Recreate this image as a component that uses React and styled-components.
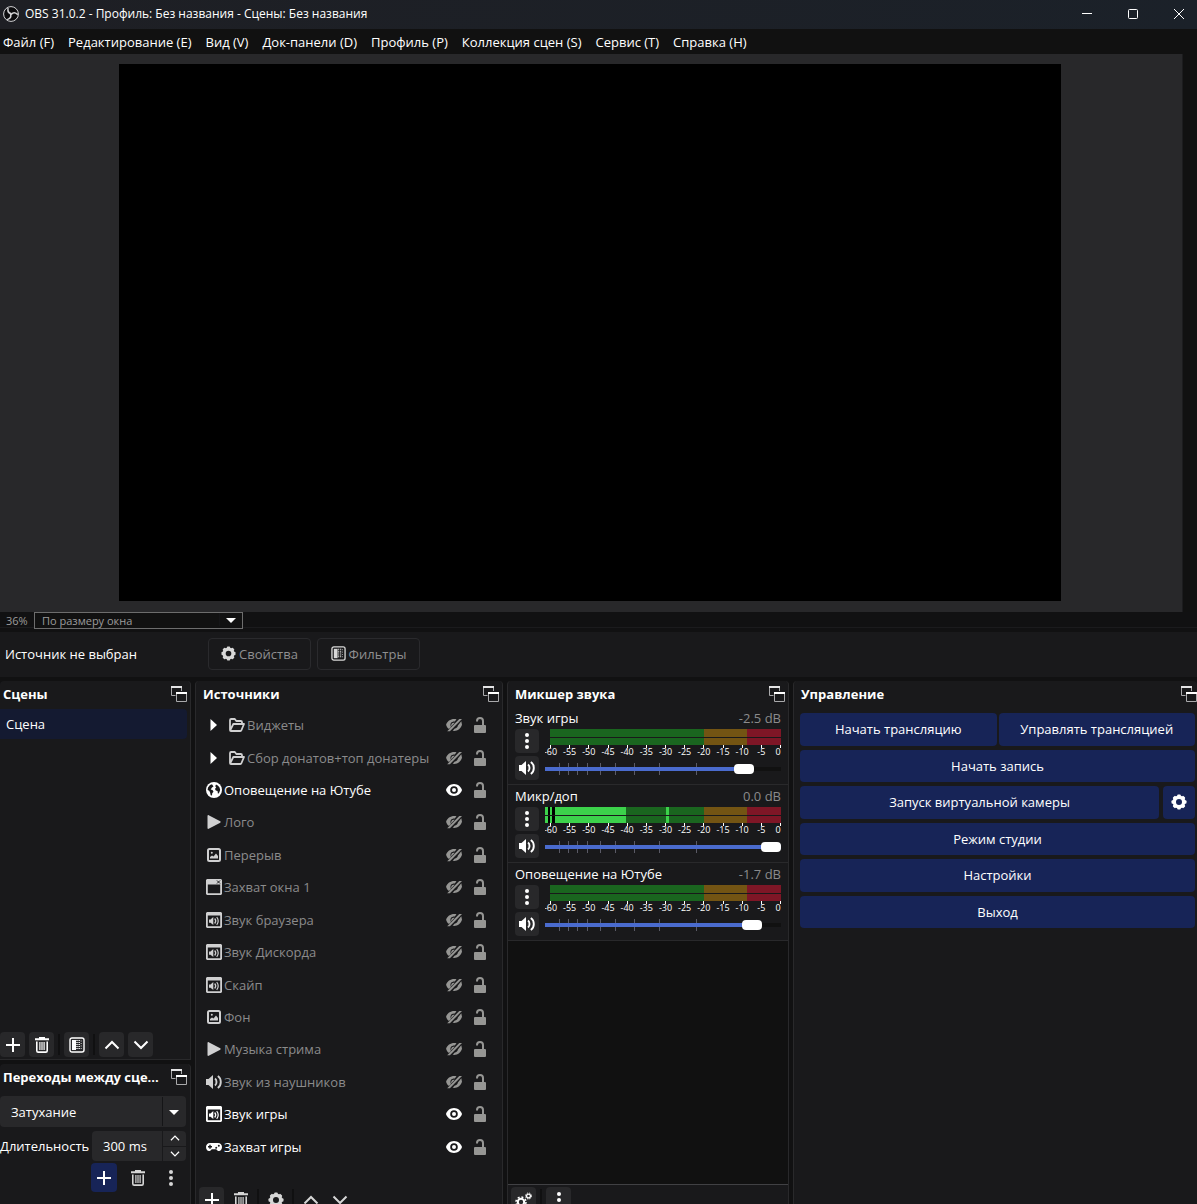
import React, { useId, useState } from 'react'
import styled, { createGlobalStyle, css } from 'styled-components'

const GlobalStyle = createGlobalStyle`
	*,
	*::before,
	*::after {
		box-sizing: border-box;
	}

	body {
		background: #111112;
		color: #fff;
		font-family: 'Open Sans', 'Noto Sans', sans-serif;
		font-size: 13px;
		line-height: 18px;
		margin: 0;
		overflow: hidden;
	}

	button,
	input,
	select {
		color: inherit;
		font: inherit;
	}

	svg {
		display: block;
		flex: none;
	}
`

/* ---------- icons ---------- */

const Icon = ({ size = 16, children }) => (
	<svg width={size} height={size} viewBox="0 0 16 16" fill="currentColor" aria-hidden="true">
		{children}
	</svg>
)

const ObsLogo = () => (
	<svg width="16" height="16" viewBox="0 0 32 32" aria-hidden="true">
		<circle cx="16" cy="16" r="14.8" fill="#0b0b0d" stroke="#d4d4d6" strokeWidth="2" />
		<g fill="none" stroke="#d4d4d6" strokeWidth="3" strokeLinecap="round">
			<path d="M10 5c-1 6 1 9 6 10" />
			<path d="M10 5c-1 6 1 9 6 10" transform="rotate(120 16 16)" />
			<path d="M10 5c-1 6 1 9 6 10" transform="rotate(240 16 16)" />
		</g>
	</svg>
)

const PopOut = () => (
	<svg width="16" height="16" viewBox="0 0 16 16" aria-hidden="true">
		<path d="M.5 2v7.500h4M10.500 2v3" fill="none" stroke="#a9a9ab" />
		<path d="M0 0h11v2H0z" fill="#e4e4e5" />
		<path d="M5.500 8v7.500h10V8" fill="none" stroke="#a9a9ab" />
		<path d="M5 6h11v2H5z" fill="#fff" />
	</svg>
)

const Gear = ({ size }) => (
	<Icon size={size}>
		<circle cx="8" cy="8" r="4.700" fill="none" stroke="currentColor" strokeWidth="3.400" />
		{[0, 45, 90, 135, 180, 225, 270, 315].map((angle) => (
			<rect key={angle} x="6.200" y="0.500" width="3.600" height="3" rx="1" transform={`rotate(${angle} 8 8)`} />
		))}
	</Icon>
)

const Gears = () => (
	<svg width="18" height="16" viewBox="0 0 18 16" aria-hidden="true">
		<g fill="none" stroke="#fff">
			<circle cx="6" cy="10" r="3.200" strokeWidth="2" />
			<circle cx="6" cy="10" r="5" strokeWidth="1.500" strokeDasharray="2 1.900" />
			<circle cx="13.500" cy="4" r="1.900" strokeWidth="1.300" />
			<circle cx="13.500" cy="4" r="3" strokeWidth="1" strokeDasharray="1.300 1.100" />
		</g>
	</svg>
)

const Filter = ({ size }) => (
	<Icon size={size}>
		<rect x="1" y="1" width="14" height="14" rx="2" fill="none" stroke="currentColor" strokeWidth="1.400" />
		<path d="M3 3h4v10H3z" />
		<path
			d="M8 3v10M10.200 3v10"
			stroke="currentColor"
			strokeWidth="1.400"
			strokeDasharray="1 1"
			fill="none"
		/>
		<path d="M12.200 3.500v10" stroke="currentColor" strokeWidth=".8" strokeDasharray="1 1.500" fill="none" />
	</Icon>
)

const Plus = () => (
	<Icon>
		<path d="M7 1h2v6h6v2H9v6H7V9H1V7h6z" />
	</Icon>
)

const Trash = () => (
	<Icon>
		<path d="M5 0h6v1.200h4v2H1v-2h4z" />
		<path d="M2.800 4.500v9.200c0 .9.500 1.400 1.400 1.400h7.600c.9 0 1.400-.5 1.400-1.400V4.500" fill="none" stroke="currentColor" strokeWidth="1.600" />
		<path d="M5.300 5h1.200v8H5.300zM7.400 5h1.200v8H7.400zM9.500 5h1.200v8H9.500z" />
	</Icon>
)

const Chevron = ({ down, size }) => (
	<Icon size={size}>
		<path
			d={down ? 'M1.500 4.500 8 11l6.500-6.500' : 'M1.500 11.500 8 5l6.500 6.500'}
			fill="none"
			stroke="currentColor"
			strokeWidth="2"
		/>
	</Icon>
)

const Dots = () => (
	<Icon>
		<circle cx="8" cy="2" r="2" />
		<circle cx="8" cy="8" r="2" />
		<circle cx="8" cy="14" r="2" />
	</Icon>
)

const Speaker = () => (
	<Icon>
		<path d="M0 5h2.500L7 1v14l-4.500-4H0z" />
		<path d="M9 4.500c2 1.500 2 5.500 0 7M11.800 2c4 2.500 4 9.500 0 12" fill="none" stroke="currentColor" strokeWidth="1.900" />
	</Icon>
)

const Eye = () => (
	<Icon>
		<path
			fillRule="evenodd"
			d="M8 2c4 0 7 2.800 8 6-1 3.200-4 6-8 6s-7-2.800-8-6c1-3.200 4-6 8-6zm0 2.200a3.800 3.800 0 1 0 0 7.600 3.800 3.800 0 0 0 0-7.600z"
		/>
		<circle cx="8" cy="8" r="2" />
	</Icon>
)

const EyeOff = () => (
	<Icon>
		<path d="M10.500 2.300C5.500 1.300 1.200 3.800.1 7.800c.4 1.800 1.400 3.200 2.900 4.300l2-2C3.400 6.600 5.500 4.400 8.800 4.600z" />
		<path d="M5.300 9.400C4.700 7 6.400 5.200 8.700 5.800z" />
		<path d="M13.300 2h2.700L3.900 14.200H1.200z" />
		<path d="m15.300 4.200.7 3.600c-1.200 4.300-5 6.700-9.400 6l2.200-2.200c1.700-.4 2.700-1.500 3.100-3.200z" />
	</Icon>
)

const Unlocked = () => (
	<svg width="12" height="16" viewBox="0 0 12 16" fill="currentColor" aria-hidden="true">
		<rect y="8" width="12" height="8" rx="1" />
		<path d="M3 4.500V4a3 3 0 0 1 6 0v5" fill="none" stroke="currentColor" strokeWidth="2" />
	</svg>
)

const Folder = () => (
	<Icon>
		<path
			d="M1 13V3.200C1 2.500 1.500 2 2.200 2h3.600l1.500 2h4.500c.7 0 1.200.5 1.200 1.200V7M1.200 13.300 4.300 7H15l-2.500 6c-.2.600-.6 1-1.200 1H2c-.6 0-1-.4-1-1"
			fill="none"
			stroke="currentColor"
			strokeWidth="1.800"
			strokeLinejoin="round"
		/>
	</Icon>
)

const Globe = () => (
	<Icon>
		<circle cx="8" cy="8" r="8" />
		<path
			d="M6 2.200 4 3 2 5.500 1.600 8l1.600.8.900 1.800.6 2.600 1.300.3.200-2.300 1.300-1.500-1-1.700-1.800-.6L6 5.500l1.500-1zM10 2.500l-.8 1.700 1 1L9 7l.8 1.600 1.700.3.500 3 1.400-1.600.8-2.600-.8-2.400-1.600-1.800z"
			fill="#19191b"
		/>
	</Icon>
)

const Play = () => (
	<Icon>
		<path d="M1.500 2c0-.8.600-1.100 1.200-.8l11.500 6.100c.6.400.6 1 0 1.400L2.700 14.800c-.6.300-1.200 0-1.200-.8z" />
	</Icon>
)

const Picture = () => (
	<Icon>
		<rect x="2" y="2" width="12" height="12" rx="1.500" fill="none" stroke="currentColor" strokeWidth="2" />
		<path d="M4 11.500V10l2-1.500 1.500 1L10 6.500l2 2.500v2.500z" />
		<circle cx="5.800" cy="5.800" r="1" />
	</Icon>
)

const WindowIcon = () => (
	<Icon>
		<path fillRule="evenodd" d="M1 0h14l1 1v14l-1 1H1l-1-1V1zm.8 5.500v8.700h12.400V5.500z" />
		<path d="m11 1.500 3 3m0-3-3 3" stroke="#19191b" strokeWidth="1" />
	</Icon>
)

const WindowAudio = () => (
	<Icon>
		<path fillRule="evenodd" d="M1 0h14l1 1v14l-1 1H1l-1-1V1zm.8 3.500v10.700h12.400V3.500z" />
		<path d="M3 7.500h1.500L7.300 5v8L4.500 10.800H3z" />
		<path d="M8.700 6.500c1.200 1.400 1.200 3.600 0 5M10.700 5.200c2 2 2 5.600 0 7.600" fill="none" stroke="currentColor" strokeWidth="1.200" />
	</Icon>
)

const Gamepad = () => (
	<Icon>
		<path
			fillRule="evenodd"
			d="M4 4h8c2.500 0 4 1.700 4 4s-1.200 4-3 4c-1.200 0-2-.7-2.700-1.800H5.700C5 11.300 4.200 12 3 12c-1.800 0-3-1.700-3-4s1.500-4 4-4zM3.300 5.800v1.300H2v1.400h1.300v1.300h1.400V8.500H6V7.100H4.700V5.800zM10.800 8a1 1 0 1 0 0 1.600A1 1 0 0 0 10.800 8zm2-2.200a1 1 0 1 0 0 2 1 1 0 0 0 0-2z"
		/>
	</Icon>
)

const Expand = () => (
	<svg width="7" height="12" viewBox="0 0 7 12" fill="#fff" aria-hidden="true">
		<path d="M.5 0 7 6 .5 12z" />
	</svg>
)

const DropArrow = () => (
	<svg width="10" height="5" viewBox="0 0 10 5" fill="#fff" aria-hidden="true">
		<path d="M0 0h10L5 5z" />
	</svg>
)

/* ---------- window chrome ---------- */

const Window = styled.div`
	display: flex;
	flex-direction: column;
	height: 100vh;
	overflow: hidden;
`

const TitleBar = styled.header`
	align-items: center;
	background: linear-gradient(90deg, #1e1f24, #1b2129);
	display: flex;
	flex: none;
	gap: 6px;
	height: 29px;
	padding: 0 0 2px 3px;
`

const WindowTitle = styled.h1`
	flex: 1;
	font-size: 12px;
	font-weight: 400;
	margin: 0;
`

const WindowButtons = styled.div`
	display: flex;
	margin-right: -5px;
`

const WindowButton = styled.button`
	align-items: center;
	background: none;
	border: 0;
	display: flex;
	height: 27px;
	justify-content: center;
	padding: 0;
	width: 46px;
`

const MenuBar = styled.nav`
	background: #111;
	display: flex;
	flex: none;
	gap: 14px;
	height: 25px;
	padding: 4px 3px;
`

const MenuLink = styled.a`
	color: #fff;
	text-decoration: none;
	white-space: nowrap;
`

/* ---------- preview ---------- */

const PreviewRow = styled.div`
	display: flex;
	flex: none;
`

const Preview = styled.main`
	background: #28282a;
	border-right: 1px solid #1c1c1e;
	flex: 1;
	padding: 10px 121px 11px 119px;
`

const Canvas = styled.div`
	aspect-ratio: 942 / 537;
	background: #000;
`

const ScrollGutter = styled.div`
	background: #111;
	width: 14px;
`

const ZoomBar = styled.div`
	border-bottom: 1px solid #1b1b1d;
	color: #9c9c9c;
	display: flex;
	flex: none;
	font-size: 11px;
	height: 16px;
	line-height: 16px;
	margin-bottom: 4px;
`

const ZoomLevel = styled.span`
	padding: 1px 0 0 6px;
	width: 34px;
`

const SelectBox = styled.span`
	display: flex;
	position: relative;

	svg {
		pointer-events: none;
		position: absolute;
		right: 7px;
		top: calc(50% - 2px);
	}

	&::after {
		background: #151517;
		content: '';
		inset: 1px 23px 1px auto;
		position: absolute;
		width: 1px;
	}
`

const ZoomSelect = styled.select`
	appearance: none;
	background: #111;
	border: 1px solid #6d6d6d;
	height: 17px;
	line-height: 15px;
	padding: 0 7px;
	width: 209px;
`

const ContextBar = styled.section`
	align-items: center;
	background: #19191b;
	display: flex;
	flex: none;
	gap: 6px;
	height: 45px;
	margin-bottom: 4px;
	padding: 0 5px 2px;
`

const ContextLabel = styled.span`
	width: 197px;
`

const ContextButton = styled.button`
	align-items: center;
	background: none;
	border: 1px solid #2a2a2d;
	border-radius: 4px;
	color: #8f8f90;
	display: flex;
	gap: 3px;
	height: 32px;
	justify-content: center;
	padding: 0;
	width: 103px;

	svg {
		color: #d8d8d8;
	}
`

/* ---------- docks ---------- */

const Docks = styled.div`
	display: grid;
	flex: none;
	gap: 4px;
	grid-template-columns: 191fr 308fr 282fr 404fr;
`

const DockColumn = styled.div`
	display: flex;
	flex-direction: column;
	gap: 4px;
	min-width: 0;
`

const Dock = styled.section`
	background: #19191b;
	border: solid #29292b;
	border-width: 0 1px 1px;
	border-radius: 4px 4px 0 0;
	display: flex;
	flex-direction: column;
	flex: ${({ $grow }) => ($grow ? 1 : 'none')};
	min-width: 0;

	${({ $edge }) =>
		$edge &&
		css`
			border-${$edge}-width: 0;
		`}
`

const DockHeader = styled.header`
	align-items: center;
	display: flex;
	flex: none;
	gap: 8px;
	height: 28px;
	justify-content: space-between;
	padding: 0 ${({ $right = 3 }) => $right}px 2px ${({ $left = 7 }) => $left}px;
`

const DockTitle = styled.h2`
	font-size: 13px;
	font-weight: 700;
	margin: 0;
	white-space: nowrap;
`

const BareButton = styled.button`
	background: none;
	border: 0;
	color: inherit;
	display: flex;
	flex: none;
	justify-content: center;
	padding: 0;
`

const DockHead = ({ title, ...rest }) => (
	<DockHeader {...rest}>
		<DockTitle>{title}</DockTitle>
		<BareButton aria-label={`Открепить: ${title}`}>
			<PopOut />
		</BareButton>
	</DockHeader>
)

const Toolbar = styled.div`
	display: flex;
	flex: none;
	gap: 4px;
	padding: 2px ${({ $left = 3 }) => $left}px;
`

const ToolButton = styled.button`
	align-items: center;
	background: ${({ $flat }) => ($flat ? 'none' : '#28282a')};
	border: 0;
	border-radius: 4px;
	color: ${({ $flat }) => ($flat ? '#d6d6d6' : '#fff')};
	display: flex;
	height: 25px;
	justify-content: center;
	padding: 0;
	width: 25px;
`

const Separator = styled.span`
	background: #101011;
	margin: 2px 0;
	width: 2px;
`

const SceneList = styled.ul`
	flex: 1;
	list-style: none;
	margin: 0;
	padding: 0 3px 0 0;
`

const Scene = styled.li`
	background: #141a31;
	border-radius: 0 4px 4px 0;
	padding: 6px;
`

const TransitionForm = styled.div`
	display: flex;
	flex-direction: column;
	gap: 4px;
	padding: 4px 4px 22px 0;
`

const TransitionSelect = styled.select`
	appearance: none;
	background: #28282a;
	border: 0;
	border-radius: 4px;
	height: 31px;
	padding: 0 11px;
	width: 100%;
`

const DurationRow = styled.div`
	align-items: center;
	display: flex;
	gap: 4px;
	height: 30px;
`

const DurationLabel = styled.label`
	flex: 1;
	min-width: 0;
	white-space: nowrap;
`

const SpinBox = styled.div`
	background: #28282a;
	border-radius: 4px;
	display: flex;
	height: 30px;
	width: 94px;
`

const SpinInput = styled.input`
	background: none;
	border: 0;
	min-width: 0;
	padding: 0 0 0 11px;
	width: 70px;
`

const SpinButtons = styled.div`
	border-left: 1px solid #19191b;
	display: flex;
	flex: 1;
	flex-direction: column;

	button {
		align-items: center;
		flex: 1;
	}

	button + button {
		border-top: 1px solid #19191b;
	}
`

const TransitionTools = styled.div`
	align-items: center;
	display: flex;
	gap: 8px;
	justify-content: flex-end;
	margin-top: -2px;
	padding-right: 3px;
`

const AddButton = styled(ToolButton)`
	background: #172457;
	height: 29px;
	width: 26px;
`

/* ---------- sources ---------- */

const SourceList = styled.ul`
	display: flex;
	flex-direction: column;
	height: 454px;
	list-style: none;
	margin: 0 0 22px;
	padding: 0 16px 0 10px;
`

const Source = styled.li`
	align-items: center;
	color: ${({ $active }) => ($active ? '#fff' : '#8b8b8c')};
	display: flex;
	flex: 1;
	gap: 2px;
	padding-left: ${({ $folder }) => ($folder ? 4 : 0)}px;

	& > svg {
		color: ${({ $active }) => ($active ? '#fff' : '#d0d0d1')};
	}
`

const SourceName = styled.span`
	flex: 1;
	white-space: nowrap;
`

const ExpandButton = styled(BareButton)`
	margin-right: 10px;
`

const SourceState = styled(BareButton)`
	color: ${({ $on }) => ($on ? '#fff' : '#969694')};
	margin-right: ${({ $last }) => ($last ? 0 : 10)}px;
`

/* ---------- mixer ---------- */

const Channel = styled.div`
	border-bottom: 1px solid #29292b;
	display: grid;
	gap: 0 6px;
	grid-template-columns: 24px 1fr;
	grid-template-rows: 20px 1fr;
	height: 78px;
	padding: 2px 7px 0;

	&:first-of-type {
		height: 76px;
		padding-top: 0;
	}
`

const ChannelHead = styled.div`
	display: flex;
	grid-column: 1 / -1;
	justify-content: space-between;
`

const Decibels = styled.output`
	color: #8b8b8c;
`

const ChannelButtons = styled.div`
	display: flex;
	flex-direction: column;
	gap: 3px;
`

const ChannelButton = styled(ToolButton)`
	height: 24px;
	width: 24px;
`

const MeterSvg = styled.svg`
	display: block;
	height: 29px;
	width: 100%;

	text {
		fill: #fff;
		font-size: 9px;
		text-anchor: middle;
	}
`

const Volume = styled.div`
	display: flex;
	height: 22px;
	position: relative;
`

const VolumeTicks = styled.svg`
	height: 12px;
	left: 0;
	pointer-events: none;
	position: absolute;
	top: 5px;
	width: 100%;
`

const Slider = styled.input.attrs(({ value }) => ({
	type: 'range',
	min: 0,
	max: 1000,
	style: { '--fill': `${value / 10}%` },
}))`
	appearance: none;
	background: linear-gradient(90deg, #4a6bce var(--fill), #111 var(--fill)) center / 100% 4px no-repeat;
	height: 22px;
	margin: 0;
	width: 100%;

	&::-webkit-slider-thumb {
		appearance: none;
		background: #fff;
		border-radius: 4px;
		height: 10px;
		width: 20px;
	}
`

const MixerSpace = styled.div`
	background: #111;
	border-bottom: 1px solid #414144;
	flex: 1;
`

/* ---------- controls ---------- */

const Controls = styled.div`
	display: grid;
	gap: 4px;
	grid-template-rows: repeat(6, 1fr);
	height: 223px;
	padding: 4px 2px 4px 6px;
`

const ControlRow = styled.div`
	display: flex;
	gap: ${({ $gap = 2 }) => $gap}px;
`

const ControlButton = styled.button`
	align-items: center;
	background: #172457;
	border: 0;
	border-radius: 4px;
	display: flex;
	flex: ${({ $square }) => ($square ? '0 0 32px' : 1)};
	justify-content: center;
	padding: 0;
`

const menu = [
	'Файл (F)',
	'Редактирование (E)',
	'Вид (V)',
	'Док-панели (D)',
	'Профиль (P)',
	'Коллекция сцен (S)',
	'Сервис (T)',
	'Справка (H)',
]

const sources = [
	{ name: 'Виджеты', icon: Folder, folder: true },
	{ name: 'Сбор донатов+топ донатеры', icon: Folder, folder: true },
	{ name: 'Оповещение на Ютубе', icon: Globe, active: true },
	{ name: 'Лого', icon: Play },
	{ name: 'Перерыв', icon: Picture },
	{ name: 'Захват окна 1', icon: WindowIcon },
	{ name: 'Звук браузера', icon: WindowAudio },
	{ name: 'Звук Дискорда', icon: WindowAudio },
	{ name: 'Скайп', icon: WindowAudio },
	{ name: 'Фон', icon: Picture },
	{ name: 'Музыка стрима', icon: Play },
	{ name: 'Звук из наушников', icon: Speaker },
	{ name: 'Звук игры', icon: WindowAudio, active: true },
	{ name: 'Захват игры', icon: Gamepad, active: true },
]

const channels = [
	{ name: 'Звук игры', db: '-2.5 dB', level: 875 },
	{ name: 'Микр/доп', db: '0.0 dB', level: 1000, live: true },
	{ name: 'Оповещение на Ютубе', db: '-1.7 dB', level: 912 },
]

const METER_WIDTH = 236
const pct = (value) => `${(value / METER_WIDTH) * 100}%`
const dbToX = (db) => 5.5 + ((60 + db) / 60) * 230

const Meter = ({ live }) => (
	<MeterSvg aria-hidden="true" shapeRendering="crispEdges">
		{live && <rect width={pct(20)} height="16" fill="#000" />}
		<rect x={pct(live ? 10 : 5)} width={pct(live ? 149 : 154)} height="16" fill="#1a651f" />
		<rect x={pct(159)} width={pct(43)} height="16" fill="#735413" />
		<rect x={pct(202)} width={pct(34)} height="16" fill="#7e1626" />
		{live && (
			<g fill="#3cd24b">
				<rect width={pct(3)} height="16" />
				<rect x={pct(5)} width={pct(2)} height="16" />
				<rect x={pct(10)} width={pct(71)} height="16" />
				<rect x={pct(121)} width={pct(3)} height="16" />
			</g>
		)}
		<rect y="8" width="100%" height="1" fill="#19191b" />
		{Array.from({ length: 13 }, (_, i) => {
			const db = i * 5 - 60
			return (
				<React.Fragment key={db}>
					<rect x={pct(dbToX(db) - 0.5)} y="16" width="1" height="3" fill="#fff" />
					<text x={pct(db === 0 ? 233 : dbToX(db))} y="26">
						{db}
					</text>
				</React.Fragment>
			)
		})}
	</MeterSvg>
)

const MixerChannel = ({ name, db, level, live }) => {
	const [value, setValue] = useState(level)

	return (
		<Channel>
			<ChannelHead>
				<span>{name}</span>
				<Decibels>{db}</Decibels>
			</ChannelHead>
			<ChannelButtons>
				<ChannelButton aria-label="Меню">
					<Dots />
				</ChannelButton>
				<ChannelButton aria-label="Выключить звук">
					<Speaker />
				</ChannelButton>
			</ChannelButtons>
			<div>
				<Meter live={live} />
				<Volume>
					<Slider aria-label={name} value={value} onChange={(e) => setValue(Number(e.target.value))} />
					<VolumeTicks aria-hidden="true">
						{[14, 23, 32, 42, 55, 70, 89, 114, 151].map((x) => (
							<g key={x} fill="#5a5a66">
								<rect x={pct(x)} width="1" height="4" />
								<rect x={pct(x)} y="8" width="1" height="4" />
							</g>
						))}
					</VolumeTicks>
				</Volume>
			</div>
		</Channel>
	)
}

const Scenes = () => (
	<Dock $grow $edge="left">
		<DockHead title="Сцены" $left={3} />
		<SceneList>
			<Scene>Сцена</Scene>
		</SceneList>
		<Toolbar $left={0}>
			<ToolButton aria-label="Добавить">
				<Plus />
			</ToolButton>
			<ToolButton aria-label="Удалить">
				<Trash />
			</ToolButton>
			<Separator />
			<ToolButton aria-label="Фильтры">
				<Filter />
			</ToolButton>
			<Separator />
			<ToolButton aria-label="Вверх">
				<Chevron />
			</ToolButton>
			<ToolButton aria-label="Вниз">
				<Chevron down />
			</ToolButton>
		</Toolbar>
	</Dock>
)

const Transitions = () => {
	const durationId = useId()
	const [duration, setDuration] = useState('300 ms')

	return (
		<Dock $edge="left">
			<DockHead title="Переходы между сце..." $left={3} />
			<TransitionForm>
				<SelectBox>
					<TransitionSelect aria-label="Переход">
						<option>Затухание</option>
					</TransitionSelect>
					<DropArrow />
				</SelectBox>
				<DurationRow>
					<DurationLabel htmlFor={durationId}>Длительность</DurationLabel>
					<SpinBox>
						<SpinInput id={durationId} value={duration} onChange={(e) => setDuration(e.target.value)} />
						<SpinButtons>
							<BareButton aria-label="Больше">
								<Chevron size={10} />
							</BareButton>
							<BareButton aria-label="Меньше">
								<Chevron down size={10} />
							</BareButton>
						</SpinButtons>
					</SpinBox>
				</DurationRow>
				<TransitionTools>
					<AddButton aria-label="Добавить переход">
						<Plus />
					</AddButton>
					<ToolButton $flat aria-label="Удалить переход">
						<Trash />
					</ToolButton>
					<ToolButton $flat aria-label="Свойства перехода">
						<Dots />
					</ToolButton>
				</TransitionTools>
			</TransitionForm>
		</Dock>
	)
}

const Sources = () => (
	<Dock>
		<DockHead title="Источники" />
		<SourceList>
			{sources.map(({ name, icon: SourceIcon, folder, active }) => (
				<Source key={name} $folder={folder} $active={active}>
					{folder && (
						<ExpandButton aria-label={`Развернуть ${name}`}>
							<Expand />
						</ExpandButton>
					)}
					<SourceIcon />
					<SourceName>{name}</SourceName>
					<SourceState $on={active} aria-label="Видимость">
						{active ? <Eye /> : <EyeOff />}
					</SourceState>
					<SourceState $last aria-label="Блокировка">
						<Unlocked />
					</SourceState>
				</Source>
			))}
		</SourceList>
		<Toolbar>
			<ToolButton aria-label="Добавить источник">
				<Plus />
			</ToolButton>
			<ToolButton $flat aria-label="Удалить источник">
				<Trash />
			</ToolButton>
			<Separator />
			<ToolButton $flat aria-label="Свойства источника">
				<Gear />
			</ToolButton>
			<Separator />
			<ToolButton $flat aria-label="Выше">
				<Chevron />
			</ToolButton>
			<ToolButton $flat aria-label="Ниже">
				<Chevron down />
			</ToolButton>
		</Toolbar>
	</Dock>
)

const Mixer = () => (
	<Dock>
		<DockHead title="Микшер звука" />
		{channels.map((channel) => (
			<MixerChannel key={channel.name} {...channel} />
		))}
		<MixerSpace />
		<Toolbar>
			<ToolButton aria-label="Расширенные свойства">
				<Gears />
			</ToolButton>
			<Separator />
			<ToolButton aria-label="Меню микшера">
				<Dots />
			</ToolButton>
		</Toolbar>
	</Dock>
)

const ControlPanel = () => (
	<Dock $edge="right">
		<DockHead title="Управление" $right={0} />
		<Controls>
			<ControlRow>
				<ControlButton>Начать трансляцию</ControlButton>
				<ControlButton>Управлять трансляцией</ControlButton>
			</ControlRow>
			<ControlButton>Начать запись</ControlButton>
			<ControlRow $gap={4}>
				<ControlButton>Запуск виртуальной камеры</ControlButton>
				<ControlButton $square aria-label="Настройки камеры">
					<Gear />
				</ControlButton>
			</ControlRow>
			<ControlButton>Режим студии</ControlButton>
			<ControlButton>Настройки</ControlButton>
			<ControlButton>Выход</ControlButton>
		</Controls>
	</Dock>
)

const App = () => (
	<>
		<GlobalStyle />
		<Window>
			<TitleBar>
				<ObsLogo />
				<WindowTitle>OBS 31.0.2 - Профиль: Без названия - Сцены: Без названия</WindowTitle>
				<WindowButtons>
					<WindowButton aria-label="Свернуть">
						<svg width="10" height="10" aria-hidden="true">
							<path d="M0 4.500h10" stroke="#fff" />
						</svg>
					</WindowButton>
					<WindowButton aria-label="Развернуть">
						<svg width="10" height="10" aria-hidden="true">
							<rect x=".5" y=".5" width="9" height="9" rx="1" fill="none" stroke="#fff" />
						</svg>
					</WindowButton>
					<WindowButton aria-label="Закрыть">
						<svg width="10" height="10" aria-hidden="true">
							<path d="m0 0 10 10M10 0 0 10" stroke="#fff" />
						</svg>
					</WindowButton>
				</WindowButtons>
			</TitleBar>
			<MenuBar>
				{menu.map((item) => (
					<MenuLink key={item} href="#">
						{item}
					</MenuLink>
				))}
			</MenuBar>
			<PreviewRow>
				<Preview>
					<Canvas />
				</Preview>
				<ScrollGutter />
			</PreviewRow>
			<ZoomBar>
				<ZoomLevel>36%</ZoomLevel>
				<SelectBox>
					<ZoomSelect aria-label="Масштаб">
						<option>По размеру окна</option>
					</ZoomSelect>
					<DropArrow />
				</SelectBox>
			</ZoomBar>
			<ContextBar>
				<ContextLabel>Источник не выбран</ContextLabel>
				<ContextButton>
					<Gear size={15} />
					Свойства
				</ContextButton>
				<ContextButton>
					<Filter size={15} />
					Фильтры
				</ContextButton>
			</ContextBar>
			<Docks>
				<DockColumn>
					<Scenes />
					<Transitions />
				</DockColumn>
				<Sources />
				<Mixer />
				<ControlPanel />
			</Docks>
		</Window>
	</>
)

export default App
